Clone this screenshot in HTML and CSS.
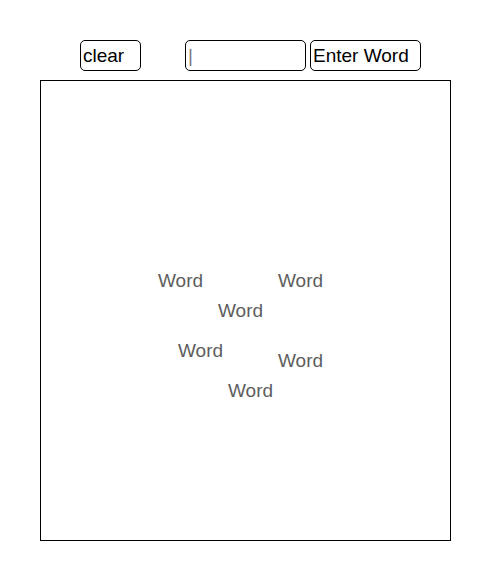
FILE: index.html
```html
<!DOCTYPE html>
<html>
<head>
<meta charset="utf-8">
<link rel="stylesheet" href="styles.css">
</head>
<body>
<div class="toolbar">
  <button class="btn btn-clear">clear</button>
  <input class="word-input" type="text" placeholder="|">
  <button class="btn btn-enter">Enter Word</button>
</div>
<div class="canvas">
  <span class="word w1">Word</span>
  <span class="word w2">Word</span>
  <span class="word w3">Word</span>
  <span class="word w4">Word</span>
  <span class="word w5">Word</span>
  <span class="word w6">Word</span>
</div>
</body>
</html>
```
FILE: styles.css
```css
html, body {
  margin: 0;
  padding: 0;
  background: #fff;
  font-family: "Liberation Sans", Arial, sans-serif;
}
.toolbar {
  display: flex;
  align-items: flex-start;
  padding-top: 40px;
  height: 31px;
}
.btn, .word-input {
  box-sizing: border-box;
  height: 31px;
  border: 1px solid #000;
  border-radius: 5px;
  background: #fff;
  color: #000;
  font-family: "Liberation Sans", Arial, sans-serif;
  font-size: 19px;
  padding: 0 2px;
  text-align: left;
  margin: 0;
}
.btn-clear {
  margin-left: 80px;
  width: 61px;
}
.word-input {
  margin-left: 44px;
  width: 121px;
  outline: none;
}
.word-input::placeholder {
  color: #777;
}
.btn-enter {
  margin-left: 4px;
  width: 111px;
}
.canvas {
  position: relative;
  box-sizing: border-box;
  margin-top: 9px;
  margin-left: 40px;
  width: 411px;
  height: 461px;
  border: 1px solid #000;
}
.word {
  position: absolute;
  font-size: 19px;
  line-height: 22px;
  color: #5e5e5e;
}
.w1 { left: 117px; top: 189px; }
.w2 { left: 237px; top: 189px; }
.w3 { left: 177px; top: 219px; }
.w4 { left: 137px; top: 259px; }
.w5 { left: 237px; top: 269px; }
.w6 { left: 187px; top: 299px; }
```
